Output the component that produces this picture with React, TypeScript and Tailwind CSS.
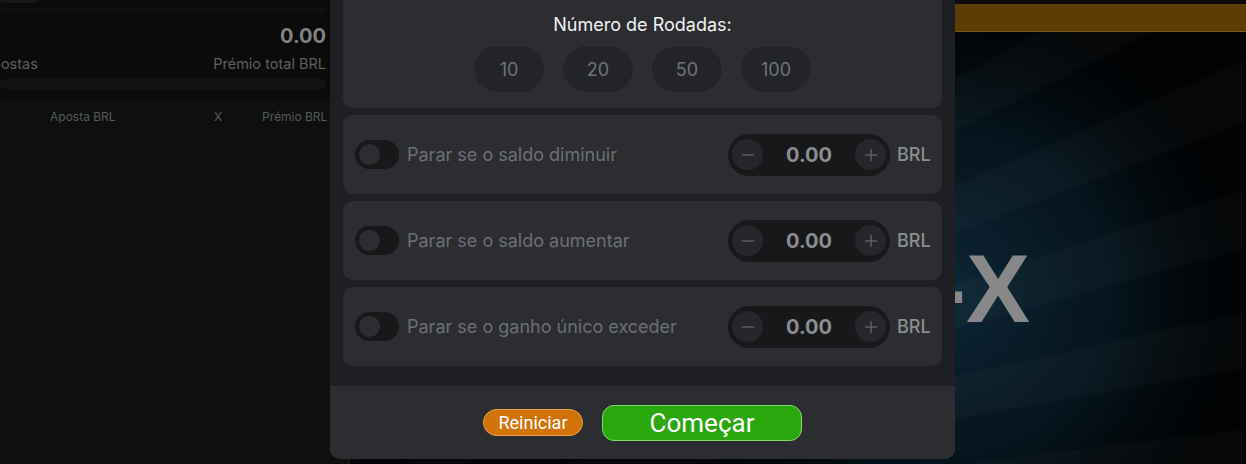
import React from "react";

function Toggle() {
  return (
    <div className="w-[44px] h-[29px] rounded-full bg-[#17181a] flex items-center pl-[4px] shrink-0">
      <div className="w-[21px] h-[21px] rounded-full bg-[#2c2d31]" />
    </div>
  );
}

function Minus() {
  return (
    <svg width="14" height="14" viewBox="0 0 14 14">
      <line x1="1" y1="7" x2="13" y2="7" stroke="#5b5e63" strokeWidth="1.5" />
    </svg>
  );
}

function Plus() {
  return (
    <svg width="14" height="14" viewBox="0 0 14 14">
      <line x1="1" y1="7" x2="13" y2="7" stroke="#5b5e63" strokeWidth="1.5" />
      <line x1="7" y1="1" x2="7" y2="13" stroke="#5b5e63" strokeWidth="1.5" />
    </svg>
  );
}

function StopRow({ label }: { label: string }) {
  return (
    <div className="h-[79px] rounded-[10px] bg-[#2c2d31] flex items-center pl-[12px] pr-[13px]">
      <Toggle />
      <span className="ml-[8px] text-[18px] text-[#6c6f74] leading-[24px] whitespace-nowrap">{label}</span>
      <div className="ml-auto w-[162px] h-[42px] rounded-full bg-[#17181a] flex items-center justify-between px-[4px]">
        <div className="w-[31px] h-[31px] rounded-full bg-[#26272a] flex items-center justify-center">
          <Minus />
        </div>
        <span className="text-[20px] font-bold text-[#8b8d91] leading-none">0.00</span>
        <div className="w-[31px] h-[31px] rounded-full bg-[#26272a] flex items-center justify-center">
          <Plus />
        </div>
      </div>
      <span className="ml-[7px] w-[32px] text-[18px] font-medium text-[#8b8d91] leading-none whitespace-nowrap">BRL</span>
    </div>
  );
}

const rays = Array.from({ length: 8 }, (_, i) => {
  const a0 = (-40 + i * 5.5) * (Math.PI / 180);
  const a1 = a0 + 2.6 * (Math.PI / 180);
  const cx = -290;
  const cy = 543;
  const r = 2000;
  return `${cx},${cy} ${cx + r * Math.cos(a0)},${cy + r * Math.sin(a0)} ${cx + r * Math.cos(a1)},${cy + r * Math.sin(a1)}`;
});

export default function App() {
  return (
    <div className="relative w-[1246px] h-[464px] overflow-hidden flex bg-[#0e1010] font-['Inter','Noto_Sans',sans-serif]">
      {/* Left panel */}
      <div className="w-[350px] shrink-0 flex flex-col border-r-2 border-[#171919] overflow-hidden">
        <div className="h-[99px] shrink-0 bg-[#0b0b0b] flex flex-col pr-[22px]">
          <div className="h-[3px] w-[38px] rounded-b-md bg-[#161717]" />
          <div className="mt-[5px] h-[5px] rounded-r bg-[#0f1010]" />
          <div className="mt-[11px] flex justify-end">
            <span className="text-[20px] leading-[24px] font-bold text-[#808383]">0.00</span>
          </div>
          <div className="mt-[6px] flex justify-between items-center">
            <span className="-ml-[18px] text-[14.5px] leading-[20px] text-[#5d6060] whitespace-nowrap">Apostas</span>
            <span className="text-[14.5px] leading-[20px] text-[#5d6060] whitespace-nowrap">Prémio total BRL</span>
          </div>
          <div className="mt-[5px] h-[10px] rounded-md bg-[#111313]" />
        </div>
        <div className="mt-[10px] flex items-center pr-[22px] text-[12px] leading-[16px] text-[#555959] whitespace-nowrap">
          <span className="w-[50px] shrink-0" />
          <span className="w-[164px] shrink-0">Aposta BRL</span>
          <span className="w-[48px] shrink-0">X</span>
          <span className="flex-1 text-right">Prémio BRL</span>
        </div>
      </div>

      {/* Game area */}
      <div className="flex-1 flex flex-col bg-[#0b0b0b] pt-[4px]">
        <div className="h-[28px] shrink-0 bg-[#5c3d06] border-b border-[#7d5410]" />
        <div className="relative flex-1 overflow-hidden bg-[#010203] flex flex-col items-end pr-[216px]">
          <svg className="absolute inset-0" width="894" height="432" viewBox="0 0 894 432">
            <defs>
              <radialGradient id="glow" cx="600" cy="262" r="340" gradientUnits="userSpaceOnUse">
                <stop offset="0" stopColor="#0d2636" stopOpacity="1" />
                <stop offset="0.5" stopColor="#061620" stopOpacity="0.85" />
                <stop offset="1" stopColor="#000000" stopOpacity="0" />
              </radialGradient>
            </defs>
            <rect x="0" y="0" width="894" height="432" fill="url(#glow)" />
            {rays.map((p, i) => (
              <polygon key={i} points={p} fill="#ffffff" fillOpacity="0.025" />
            ))}
          </svg>
          <div className="relative mt-[209px] text-[96px] leading-none font-bold text-[#888888] font-['Liberation_Sans',Arial,sans-serif]">
            -X
          </div>
        </div>
      </div>

      {/* Modal */}
      <div className="absolute left-[330px] top-[-12px] w-[625px] bg-[#1e1f22] rounded-b-[10px] overflow-hidden flex flex-col">
        <div className="px-[13px] pb-[20px] flex flex-col gap-[7px]">
          <div className="h-[120px] rounded-[10px] bg-[#2c2d31] flex flex-col items-center pt-[25px]">
            <span className="text-[18px] leading-[24px] font-normal text-[#f2f2f2]">Número de Rodadas:</span>
            <div className="mt-[8px] flex gap-[17px]">
              {["10", "20", "50", "100"].map((n) => (
                <div
                  key={n}
                  className="w-[72px] h-[48px] rounded-full bg-[#232427] border border-[#303135] flex items-center justify-center text-[18px] text-[#6f7378]"
                >
                  {n}
                </div>
              ))}
            </div>
          </div>
          <StopRow label="Parar se o saldo diminuir" />
          <StopRow label="Parar se o saldo aumentar" />
          <StopRow label="Parar se o ganho único exceder" />
        </div>
        <div className="h-[73px] bg-[#2c2d31] flex items-center justify-center gap-[19px] font-['Roboto',sans-serif]">
          <div className="w-[100px] h-[27px] rounded-full bg-[#d2730a] border border-[#eea04c] flex items-center justify-center text-[18px] text-white leading-none">
            Reiniciar
          </div>
          <div className="w-[200px] h-[36px] rounded-[12px] bg-[#2aa70d] border border-[#86d868] flex items-center justify-center text-[26px] text-white leading-none">
            Começar
          </div>
        </div>
      </div>
    </div>
  );
}
